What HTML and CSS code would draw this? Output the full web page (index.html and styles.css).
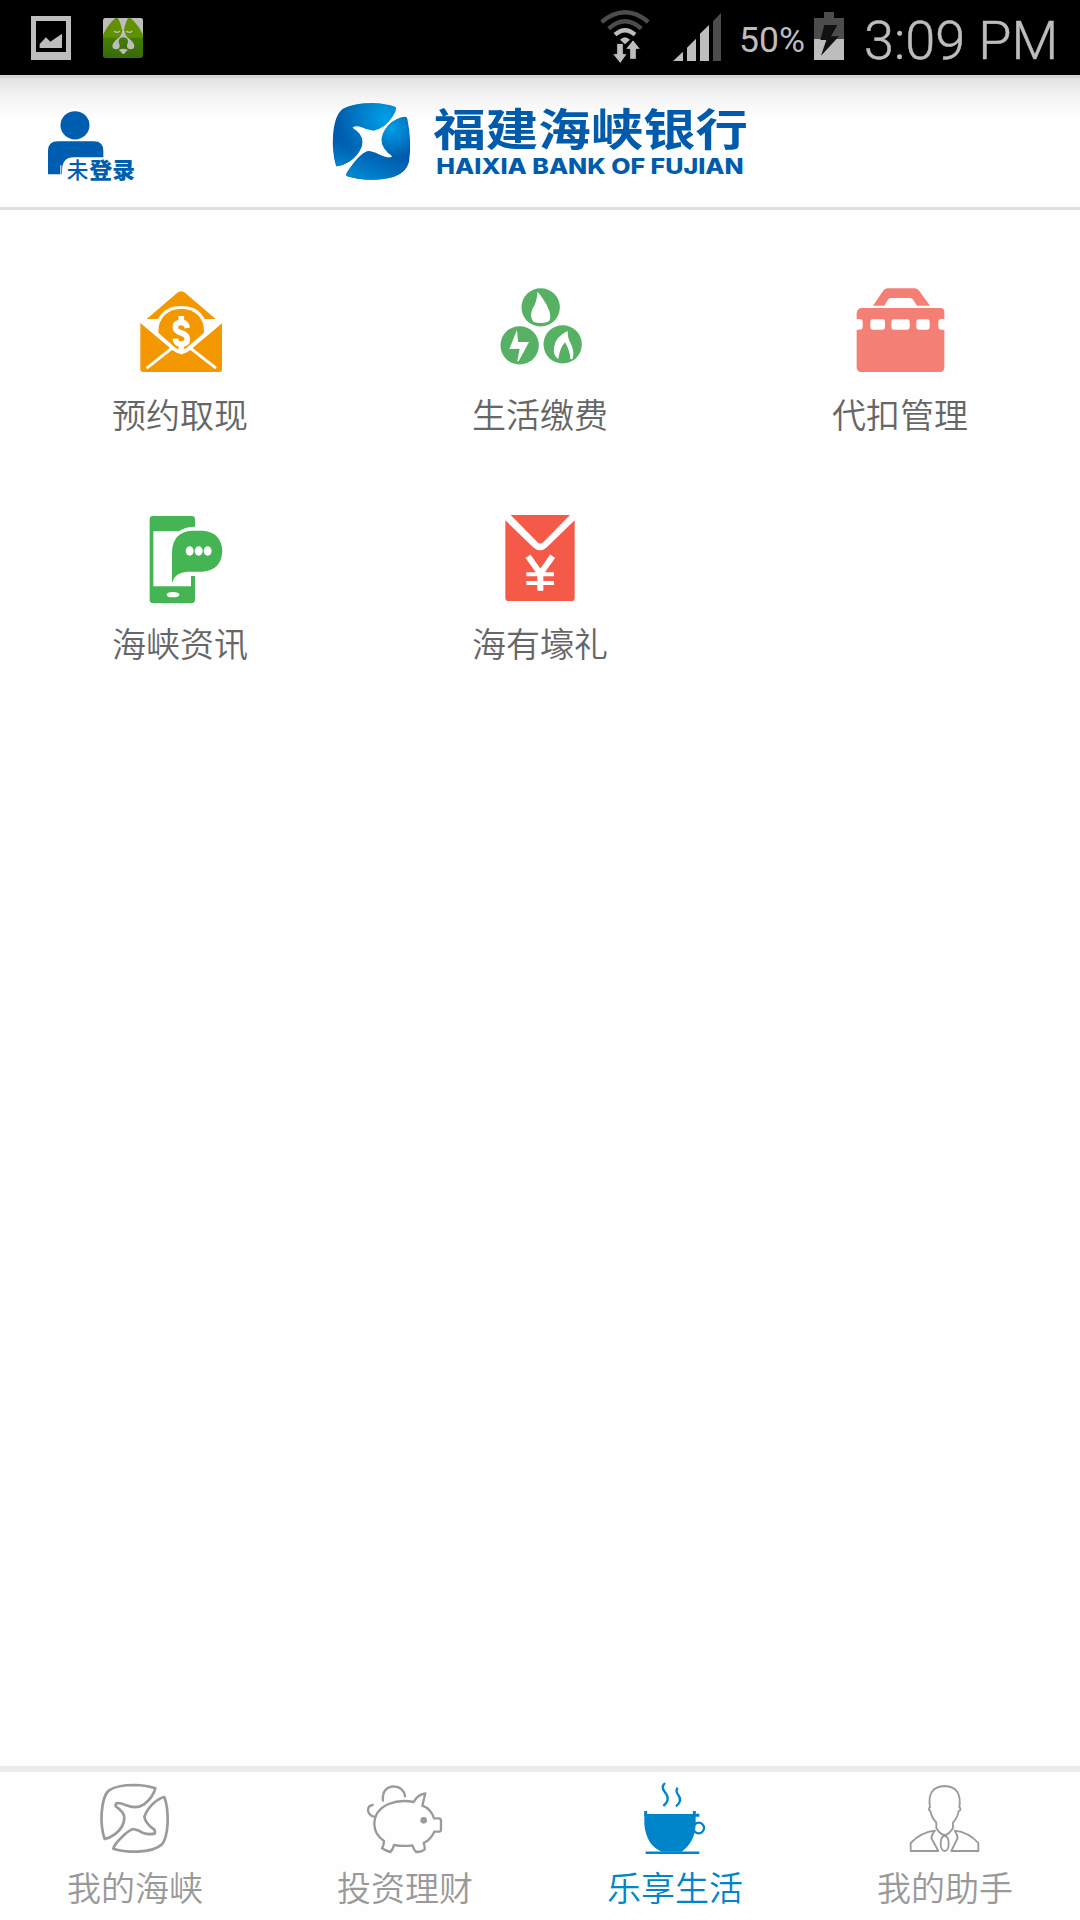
FILE: index.html
```html
<!DOCTYPE html>
<html lang="zh-CN">
<head>
<meta charset="utf-8">
<title>福建海峡银行</title>
<link rel="stylesheet" href="styles.css">
</head>
<body>
<div class="screen">
  <div class="status">
    <div class="status-left">
      <svg class="st-photo" viewBox="93 48 120 132"><path fill="#bdbdbd" fill-rule="evenodd" d="M93 48h120v132H93zM108 63v93h90V63z"/><path fill="#bdbdbd" d="M119 144v-12l19-20 13 13 35-24v43z"/></svg>
      <svg class="st-app" viewBox="309 54 120 120">
        <defs><linearGradient id="leaf" x1="0" y1="0" x2="0" y2="1"><stop offset="0" stop-color="#658f05"/><stop offset=".48" stop-color="#5c9200"/><stop offset=".5" stop-color="#447d08"/><stop offset="1" stop-color="#386a08"/></linearGradient></defs>
        <rect x="309" y="54" width="120" height="120" rx="8" fill="url(#leaf)"/>
        <path fill="#bdbdbd" d="M309 62q0-8 8-8h29q-23 21-37 50zM429 62q0-8-8-8h-29q23 21 37 50zM354 54h30q-12 24-13 46h-4q-1-22-13-46z"/>
        <path fill="#bdbdbd" d="M366 92h8q1 15 12 23 17 13 17 24-1 10-13 9-10-2-9-13 4-9 3-13-4-10-14-10t-14 10q-1 4 3 13 1 11-9 13-12 1-13-9 0-11 17-24 11-8 12-23z"/>
        <path fill="none" stroke="#bdbdbd" stroke-width="4" d="M342 93q9 8 18 0M379 93q9 8 18 0"/>
        <path fill="#bdbdbd" d="M357 149q13-5 26 0-1 5-6 6-2 7-7 7t-7-7q-5-1-6-6z"/>
      </svg>
    </div>
    <div class="status-right">
      <svg class="st-wifi" viewBox="60 27 150 165">
        <g fill="none" stroke-width="13"><path stroke="#4c4c4c" d="M65 66Q135 8 205 66M86 86Q135 42 184 86"/><path stroke="#bdbdbd" d="M105 104Q135 77 165 104"/></g>
        <path fill="#bdbdbd" d="M120 119q15-15 30 0l-15 14z"/>
        <path fill="#bdbdbd" stroke="#000" stroke-width="3" d="M110 130h20v31h12l-21 30-24-30h13zM149 178v-30h-13l23-29 23 29h-13v30z"/>
      </svg>
      <svg class="st-signal" viewBox="279 36 144 147"><path fill="#bdbdbd" d="M279 183l30-28v28zM321 183v-40l27-27v67zM360 183v-82l27-26v108z"/><path fill="#4c4c4c" d="M399 183V64l24-25v144z"/></svg>
      <span class="percent">50%</span>
      <svg class="st-battery" viewBox="702 36 90 144"><path fill="#4c4c4c" d="M702 54h30V36h30v18h30v63h-90z"/><path fill="#bdbdbd" d="M702 117h90v63h-90z"/><path fill="#111" d="M733 75h39l-19 34h24l-54 58 16-47h-18z"/></svg>
      <span class="clock">3:09 PM</span>
    </div>
  </div>

  <header class="header">
    <svg class="user" viewBox="135 324 276 228">
      <ellipse cx="225" cy="376" rx="43.500" ry="42.500" fill="#005eb0"/>
      <path fill="#005eb0" d="M144 523v-70q0-29 29-29h109q28 0 28 29v19h-89q-34 0-35 39v12h-2v-27h-3v27z"/>
      <path fill="none" stroke="#005eb0" stroke-width="2" d="M177 494v29"/>
      <text class="login" x="200" y="533" textLength="65" lengthAdjust="spacingAndGlyphs">未</text>
      <text class="login heavy" x="268" y="535" textLength="137" lengthAdjust="spacingAndGlyphs">登录</text>
    </svg>
    <svg class="brand" viewBox="60 36 1260 273">
      <defs>
        <radialGradient id="g1" gradientUnits="userSpaceOnUse" cx="225" cy="115" r="145"><stop offset="0" stop-color="#009fe8"/><stop offset="1" stop-color="#005bac"/></radialGradient>
        <radialGradient id="g2" gradientUnits="userSpaceOnUse" cx="245" cy="145" r="90"><stop offset="0" stop-color="#009fe8"/><stop offset="1" stop-color="#005bac"/></radialGradient>
        <linearGradient id="g3" gradientUnits="userSpaceOnUse" x1="115" y1="185" x2="95" y2="260"><stop offset="0" stop-color="#007bc8" stop-opacity="0"/><stop offset="1" stop-color="#0084d0"/></linearGradient>
        <linearGradient id="g4" gradientUnits="userSpaceOnUse" x1="225" y1="215" x2="195" y2="300"><stop offset="0" stop-color="#007bc8" stop-opacity="0"/><stop offset="1" stop-color="#0084d0"/></linearGradient>
      </defs>
      <path fill="url(#g1)" d="M78 257Q66 215 69 167 73 105 99 86 130 69 187 69 228 70 257 81 261 89 249 108 225 146 190 152 170 150 155 142 139 136 128 142 130 148 140 152 162 170 156 198 145 229 117 245 100 256 80 259z"/>
      <path fill="url(#g3)" d="M70 180L156 185q-3 36-39 60-17 11-37 14-10-35-10-79z"/>
      <path fill="url(#g2)" d="M285 110q5-1 7 6 14 68 5 130-9 33-45 44-30 9-66 9-45 0-76-11-4-5 6-18 38-56 62-57 16 2 35 13 20 10 33 4-1-5-12-11-28-27-16-57 12-31 44-46 12-6 23-6z"/>
      <path fill="url(#g4)" d="M178 213q16 2 35 13 20 10 33 4l54-20q0 20-5 40-14 30-43 40-30 9-66 9-45 0-76-11-4-5 6-18 38-56 62-57z"/>
      <text class="brand-cn" x="370" y="197" textLength="944" lengthAdjust="spacingAndGlyphs">福建海峡银行</text>
      <text class="brand-en" x="379" y="282" textLength="922" lengthAdjust="spacingAndGlyphs">HAIXIA BANK OF FUJIAN</text>
    </svg>
  </header>

  <main class="grid">
    <a class="cell">
      <svg class="icon" viewBox="135 45 270 270"><g fill="#f39800">
        <path d="M170 147L262 68q11-9 23 0l92 79h-33q-20-39-70-39t-70 39z"/>
        <path d="M205 188q-1-34 20-54 21-18 49-18t49 18q20 20 19 54l-52 45q-16 12-34 0z"/>
        <path d="M151 157l123 97 122-97v141q0 8-8 8H159q-8 0-8-8z"/></g>
        <path fill="none" stroke="#fff" stroke-width="9" stroke-linecap="round" d="M153 155l99 83q22 18 44 0l99-83M173 292l75-59M375 292l-76-59"/>
        <path fill="none" stroke="#fff" stroke-width="17" d="M292 174q-3-17-18-17-18 0-18 15 0 12 18 17 18 6 18 19 0 14-18 14-17 0-18-16M274 138v20M274 219v22"/>
      </svg>
      <span>预约取现</span>
    </a>
    <a class="cell">
      <svg class="icon" viewBox="135 45 270 270"><g fill="#56b164"><circle cx="272" cy="112" r="57.500"/><circle cx="209" cy="226" r="57.500"/><circle cx="338" cy="223" r="57.500"/></g>
        <g fill="#fff"><path d="M262 65q8 7 17 22 14 20 20 38 6 29-7 31-21 6-42-1-12-15-3-38 15-23 15-52z"/><path d="M201 180l-23 57 31-1-7 37 4 1 31-58h-33z"/><path d="M353 183q-1 20 10 39 12 26 4 46l-6-1q-1-26-16-50-16 18-20 50-17-10-13-35 4-32 41-49z"/></g></svg>
      <span>生活缴费</span>
    </a>
    <a class="cell">
      <svg class="icon" viewBox="135 45 270 270"><g fill="#f47f75"><path d="M189 107l30-44q5-8 14-8h81q8 0 14 8l32 44h-39l-11-17q-4-6-10-6h-57q-6 0-10 6l-10 17z"/><path fill-rule="evenodd" d="M140 130q2-16 16-16h235q12 0 12 12v21h-9q-9 0-9 9v14q0 9 9 9h9v113q0 14-14 14H154q-14 0-14-14V179h9q9 0 9-9v-14q0-9-9-9h-9zM188 148q-7 0-7 7v17q0 7 7 7h30q7 0 7-7v-17q0-7-7-7zM251 148q-7 0-7 7v17q0 7 7 7h41q7 0 7-7v-17q0-7-7-7zM326 148q-7 0-7 7v17q0 7 7 7h26q7 0 7-7v-17q0-7-7-7z"/></g></svg>
      <span>代扣管理</span>
    </a>
    <a class="cell">
      <svg class="icon" viewBox="135 42 270 270"><g fill="#45b554"><path fill-rule="evenodd" d="M179 58q0-10 10-10h116q10 0 10 10v22q-32 0-48 14h-77v165h113v-31h12v71q0 10-10 10H189q-10 0-10-10zM249 276c-12 0-19 3-19 8s7 8 19 8 19-3 19-8-7-8-19-8z"/><path d="M246 248v-94q3-58 60-62h30q58 3 61 61-3 59-61 62h-43q-40 3-47 33z"/></g><g fill="#fff"><ellipse cx="299" cy="153" rx="12" ry="14"/><ellipse cx="326" cy="153" rx="12" ry="14"/><ellipse cx="353" cy="153" rx="12" ry="14"/></g></svg>
      <span>海峡资讯</span>
    </a>
    <a class="cell">
      <svg class="icon" viewBox="135 42 270 270"><g fill="#f55948"><path d="M182 45h178l-80 81q-9 9-18 0z"/><path d="M166 61l85 82q19 16 38 0l85-82v232q0 10-10 10H176q-10 0-10-10z"/></g><path fill="none" stroke="#fff" stroke-width="18" d="M234 169l37 52 37-52M271 214v58"/><path fill="none" stroke="#fff" stroke-width="12" d="M229 223h83M229 249h83"/></svg>
      <span>海有壕礼</span>
    </a>
  </main>

  <nav class="tabs">
    <a class="tab">
      <svg viewBox="165 81 240 216"><g class="line" stroke-width="8"><path d="M194 252q-12-35-9-78 4-54 22-68 24-16 75-16 40 1 64 10-7 27-34 48-22 15-53 3-15-7-29-7-5 6-2 11 25 16 25 35-1 27-29 48-15 11-30 14z"/><path d="M373 126q11 29 10 78-3 46-16 63-22 21-74 23-49 0-73-9 3-14 27-36 18-18 32-23 18 3 30 12 18 6 35 2 2-6-1-12-26-18-30-38 6-20 26-40 17-16 34-20z"/></g></svg>
      <span>我的海峡</span>
    </a>
    <a class="tab">
      <svg viewBox="165 81 240 216"><g class="line" stroke-width="7"><path d="M219 137Q215 98 250 94 281 95 285 124M188 150Q174 152 174 166 176 182 193 185M311 141Q270 133 236 147C208 159 193 182 193 208Q194 240 222 258 222 270 216 280 228 288 241 291 249 284 252 270 280 275 307 271 311 284 319 291 333 292 344 284 345 274 341 264 361 255 373 230H387Q393 229 393 224V197Q393 191 387 190H372Q363 161 337 152L346 115Q322 119 311 141z"/></g><circle cx="341" cy="196" r="10" fill="#9a9a9a"/></svg>
      <span>投资理财</span>
    </a>
    <a class="tab active">
      <svg viewBox="165 81 240 216"><g fill="none" stroke="#0085ca"><path stroke-width="7" d="M255 84q-13 12-1 26 20 24-4 43M293 98q-8 10 2 22 13 18-7 34"/><circle cx="356" cy="219" r="16" stroke-width="7"/><path stroke-width="9" d="M197 294h161M197 168v14M343 168v14M340 181h18"/></g><path fill="#0085ca" d="M193 177h154v31q-2 54-42 82h-60q-46-18-52-82z"/></svg>
      <span>乐享生活</span>
    </a>
    <a class="tab">
      <svg viewBox="165 81 240 216"><g class="line" stroke-width="5.500"><path d="M240 157q-10-62 44-64 53 2 44 64 4 1 3 8l-5 3q-2 17-17 35v16q-11 19-25 21-15-2-25-21v-16q-14-15-18-35l-4-3q-1-7 3-8zM255 227Q214 231 182 264v24H265L244 249Q246 236 255 227zM314 227Q355 231 385 264v24H304L323 249Q321 236 314 227zM284 243C275 243 272 254 272 267 272 279 277 288 284 288S296 279 296 267C296 254 293 243 284 243z"/></g></svg>
      <span>我的助手</span>
    </a>
  </nav>
</div>
</body>
</html>
```
FILE: styles.css
```css
* { box-sizing: border-box; }
body { margin: 0; background: #fefefe; font-family: "Noto Sans CJK SC", sans-serif; }
svg { display: block; flex: none; }
.screen { width: 1080px; height: 1920px; display: flex; flex-direction: column; background: #fefefe; overflow: hidden; }

.status { height: 75px; flex: none; background: #000; color: #bdbdbd; display: flex; justify-content: space-between; font-family: Roboto, sans-serif; }
.status-left { display: flex; gap: 32px; padding: 16px 0 0 31px; }
.st-photo { width: 40px; height: 44px; }
.st-app { width: 40px; height: 40px; margin-top: 2px; }
.status-right { display: flex; padding-right: 23px; }
.st-wifi { width: 50px; height: 55px; margin-top: 9px; }
.st-signal { width: 48px; height: 49px; margin: 12px 0 0 23px; }
.percent { width: 65px; margin: 19px 0 0 18px; font-size: 35.5px; line-height: 43px; white-space: nowrap; }
.st-battery { width: 30px; height: 48px; margin: 12px 0 0 10px; }
.clock { width: 193px; margin: 9px 0 0 20px; font-size: 54px; line-height: 64px; font-weight: 300; white-space: nowrap; -webkit-text-stroke: 0.5px #bdbdbd; }

.header { height: 135px; flex: none; display: flex; border-top: 3px solid #d4d4d4; border-bottom: 3px solid #e0e0e0; background: linear-gradient(#e1e1e1, #f1f1f1 15px, #fefefe 38px); }
.user { width: 92px; height: 76px; margin: 30px 0 0 45px; }
.brand { width: 420px; height: 91px; margin: 14px 0 0 193px; }
.login { font-size: 66px; font-weight: 500; fill: #005eb0; }
.heavy { font-weight: 900; }
.brand-cn { font-size: 134px; font-weight: 700; fill: #005bac; }
.brand-en { font-family: Inter, sans-serif; font-size: 63px; font-weight: 800; fill: #005bac; }

.grid { flex: 1; display: grid; grid-template-columns: repeat(3, 360px); grid-auto-rows: 229px; padding-top: 75px; }
.cell { display: flex; flex-direction: column; align-items: center; color: #666; font-size: 34px; line-height: 50px; font-weight: 350; }
.icon { width: 90px; height: 90px; margin-bottom: 14px; }

.tabs { height: 154px; flex: none; display: grid; grid-template-columns: repeat(4, 270px); border-top: 6px solid #ebebeb; }
.tab { display: flex; flex-direction: column; align-items: center; padding-top: 10px; color: #999; font-size: 34px; line-height: 50px; font-weight: 350; }
.tab svg { width: 80px; height: 72px; margin-bottom: 8px; }
.active { color: #0085ca; }
.line { fill: none; stroke: #9a9a9a; stroke-linejoin: round; stroke-linecap: round; }
```
